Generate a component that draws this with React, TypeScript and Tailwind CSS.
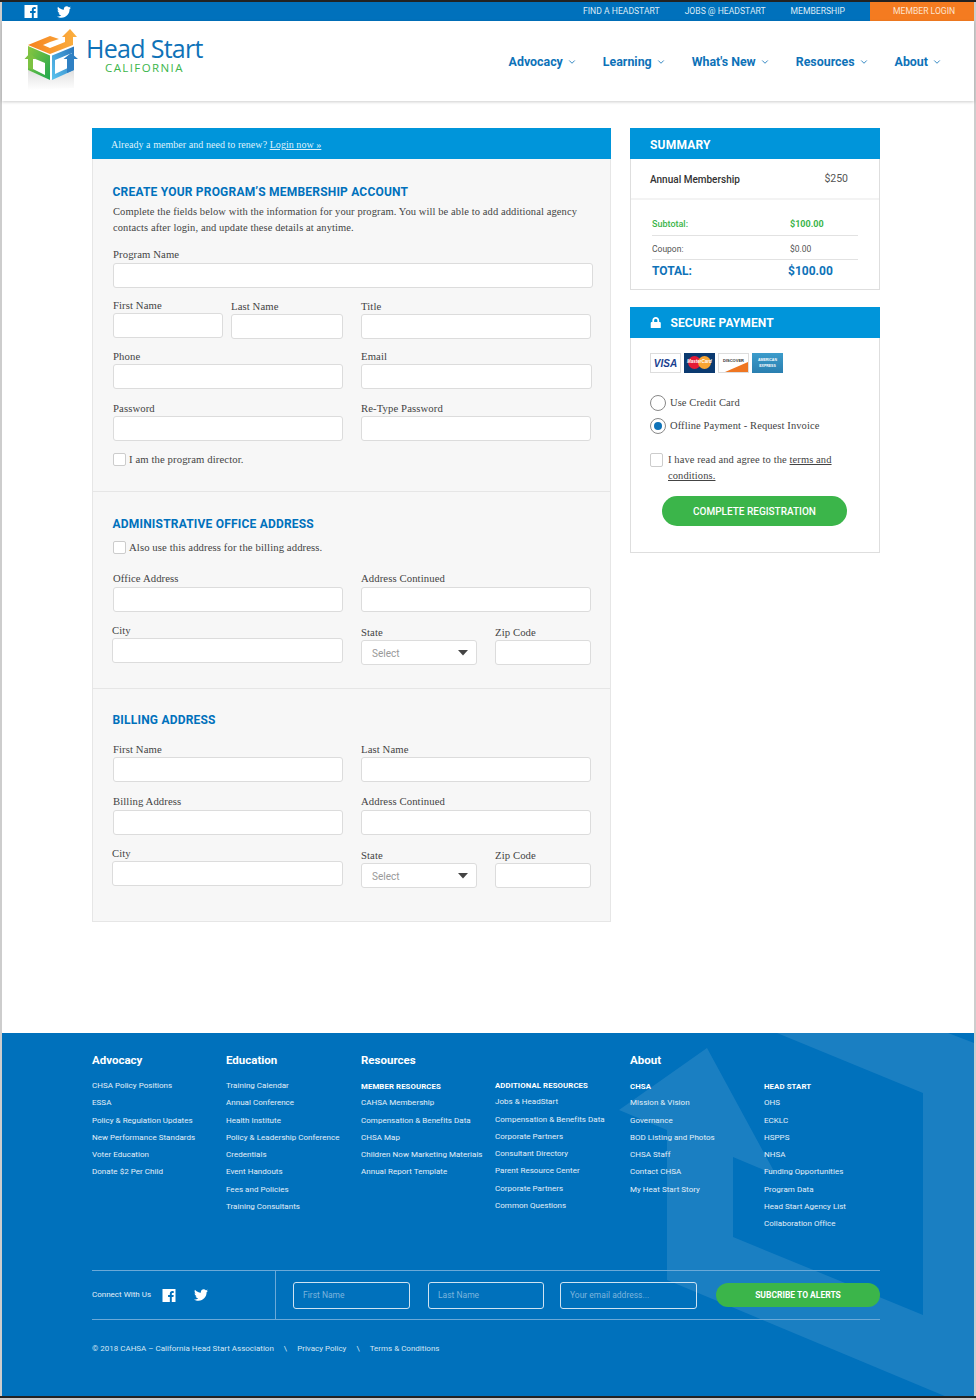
import React from "react";
import { FaTwitter, FaLock } from "react-icons/fa";
import { ChevronDown } from "lucide-react";

const serif = "[font-family:'Liberation_Serif',serif] text-[10.5px] tracking-[0.1px] text-[#444]";
const serifLabel = "[font-family:'Liberation_Serif',serif] text-[10.7px] tracking-[0.1px] text-[#444]";

function Fb({ className }: { className?: string }) {
  return (
    <svg viewBox="0 0 14 14" className={className} fill="white">
      <path d="M0 0H14V14H10V8.6h1.8l.3-2.1H10V5.2c0-.6.2-1 1-1h1.1V2.3C11.9 2.3 11.3 2.2 10.6 2.2 9 2.2 7.9 3.2 7.9 5v1.5H6v2.1h1.9V14H0Z" />
    </svg>
  );
}

function Logo() {
  return (
    <svg viewBox="22 26 58 66" width="58" height="66" className="shrink-0">
      <defs>
        <linearGradient id="or" x1="0" y1="0" x2="1" y2="0">
          <stop offset="0" stopColor="#f58220" />
          <stop offset="1" stopColor="#fbb040" />
        </linearGradient>
        <linearGradient id="gr" x1="0" y1="0" x2="1" y2="1">
          <stop offset="0" stopColor="#8dc63f" />
          <stop offset="1" stopColor="#1fa84f" />
        </linearGradient>
        <linearGradient id="bl" x1="0" y1="1" x2="1" y2="0">
          <stop offset="0" stopColor="#5cc4ef" />
          <stop offset="1" stopColor="#2a75bb" />
        </linearGradient>
        <linearGradient id="sh" x1="0" y1="0" x2="0" y2="1">
          <stop offset="0" stopColor="#e0e0e0" />
          <stop offset="1" stopColor="#ffffff" />
        </linearGradient>
      </defs>
      <polygon points="28,70 50,80 74,70 74,88 28,90" fill="url(#sh)" />
      <path fill="url(#or)" d="M28 45 50 36 59 39 50 42 43 45 50 48 65 42 65 37 62 37 70 29 77 37 73 37 73 45 50 54Z" />
      <polygon points="28,46 50,55.5 50,80 28,70" fill="url(#gr)" />
      <polygon points="33,58 45,63 45,75 33,69" fill="white" />
      <polygon points="30,53 36.5,59 33,59 33,70 28,68 28,59 24.5,59" fill="#7cc242" />
      <polygon points="52,55.5 74,46.5 74,70 52,80" fill="url(#bl)" />
      <polygon points="55,60 72,53 72,66 55,74" fill="white" />
      <polygon points="71,53 78,59 74,59 74,70 67,73 67,59 63.5,59" fill="#2f80c3" />
    </svg>
  );
}

function Field({
  label,
  className,
  labelClass = "",
}: {
  label: string;
  className: string;
  labelClass?: string;
}) {
  return (
    <div className={className}>
      <label className={`block h-4 leading-4 ${serifLabel} ${labelClass}`}>{label}</label>
      <input type="text" className="block h-[25px] w-full rounded-[3px] border border-[#dcdcdc] bg-white" />
    </div>
  );
}

function SelectField() {
  return (
    <div className="mt-[2px] w-[116px]">
      <label className={`block h-4 leading-4 ${serifLabel}`}>State</label>
      <div className="flex h-[25px] items-center justify-between rounded-[3px] border border-[#dcdcdc] bg-white pl-[10px] pr-[8px] pt-px [font-family:Roboto,sans-serif] text-[10px] text-[#999]">
        <span>Select</span>
        <svg width="10" height="6" viewBox="0 0 10 6">
          <polygon points="0,0 10,0 5,5.5" fill="#444" />
        </svg>
      </div>
    </div>
  );
}

function Heading({ children }: { children: React.ReactNode }) {
  return (
    <h2 className="-ml-[0.5px] h-4 [font-family:Roboto,sans-serif] text-[12px] font-bold uppercase leading-[18px] tracking-[0.2px] text-[#0071bc]">
      {children}
    </h2>
  );
}

function Check({ children }: { children: React.ReactNode }) {
  return (
    <div className="flex h-[13px] items-center">
      <span className="h-[13px] w-[13px] rounded-[2px] border border-[#ccc] bg-white" />
      <span className={`ml-[3px] ${serifLabel}`}>{children}</span>
    </div>
  );
}

function Cards() {
  return (
    <div className="flex gap-[3px]">
      <div className="flex h-[20px] w-[31px] items-center justify-center border border-[#ddd] bg-white [font-family:'Liberation_Sans',sans-serif] text-[10px] font-bold italic text-[#1a3f8f]">
        VISA
      </div>
      <div className="relative h-[20px] w-[31px] overflow-hidden bg-[#0b3a70]">
        <span className="absolute left-[4px] top-[3px] h-[13px] w-[13px] rounded-full bg-[#e31b35]" />
        <span className="absolute left-[14px] top-[3px] h-[13px] w-[13px] rounded-full bg-[#f9a533]" />
        <span className="absolute inset-x-0 top-[6px] text-center [font-family:'Liberation_Sans',sans-serif] text-[4.5px] font-bold italic leading-[6px] text-white">
          MasterCard
        </span>
      </div>
      <div className="relative h-[20px] w-[31px] overflow-hidden border border-[#ddd] bg-white">
        <span className="absolute inset-x-0 top-[4px] text-center [font-family:'Liberation_Sans',sans-serif] text-[4px] font-bold leading-[5px] text-[#333]">
          DISCOVER
        </span>
        <svg className="absolute bottom-0 right-0" width="29" height="10" viewBox="0 0 29 10">
          <polygon points="29,0 29,10 6,10" fill="#ef7622" />
        </svg>
      </div>
      <div className="flex h-[20px] w-[31px] flex-col items-center justify-center bg-gradient-to-b from-[#3c9ccb] to-[#2a7fb0] [font-family:'Liberation_Sans',sans-serif] text-[3.5px] font-bold leading-[6px] text-white">
        <span>AMERICAN</span>
        <span>EXPRESS</span>
      </div>
    </div>
  );
}

const link = "block h-[17.25px] leading-[17.25px] [font-family:Roboto,sans-serif] text-[8px] tracking-[0.03px] text-[#e3eff8]";
const sub = "block h-[17.25px] leading-[19px] [font-family:Roboto,sans-serif] text-[7.8px] font-bold uppercase tracking-[0.1px] text-white";
const colHead = "h-4 leading-4 [font-family:Roboto,sans-serif] text-[11.5px] font-bold text-white";

function Col({ head, subhead, items, className = "" }: { head?: string; subhead?: string; items: string[]; className?: string }) {
  return (
    <div className={className}>
      <div className={colHead}>{head ?? "\u00a0"}</div>
      <div className="mt-[9px]">
        {subhead && <span className={sub}>{subhead}</span>}
        {items.map((t, i) => (
          <span key={i} className={link}>
            {t}
          </span>
        ))}
      </div>
    </div>
  );
}

function FooterInput({ placeholder, className }: { placeholder: string; className: string }) {
  return (
    <div className={`flex h-[27px] items-center rounded-[3px] border border-[#cfe3f2] pl-[9px] [font-family:Roboto,sans-serif] text-[8.5px] text-[#7db5dd] ${className}`}>
      {placeholder}
    </div>
  );
}

export default function App() {
  return (
    <div className="flex h-[1400px] flex-col bg-[#cdcdcd] px-[2px]">
      <div className="-mx-[2px] h-[2px] bg-[#222]" />
      <div className="flex h-[19px] items-stretch bg-[#0071bc] [font-family:Roboto,sans-serif] text-[8.6px] text-[#dcebf6]">
        <Fb className="ml-[22px] mt-[3px] h-[13px] w-[14px]" />
        <FaTwitter className="ml-[19px] mt-[3px] text-[14px] text-white" />
        <div className="ml-auto flex items-center gap-[25px] pr-[25px]">
          <span>FIND A HEADSTART</span>
          <span>JOBS @ HEADSTART</span>
          <span>MEMBERSHIP</span>
        </div>
        <div className="flex w-[104px] items-center bg-[#f47b20] pl-[23px] text-[#fde3cf]">MEMBER LOGIN</div>
      </div>

      <header className="relative z-10 flex h-[80px] items-start bg-white shadow-[0_1px_3px_rgba(0,0,0,0.2)]">
        <div className="ml-[20px] mt-[5px]">
          <Logo />
        </div>
        <div className="ml-[6px] mt-[14px] flex flex-col">
          <span className="[font-family:'Open_Sans',sans-serif] text-[25px] font-medium leading-[26px] tracking-[-0.7px] text-[#0e72b8]">
            Head Start
          </span>
          <span className="ml-[19px] [font-family:'Open_Sans',sans-serif] text-[11.5px] font-medium leading-[14px] tracking-[1.4px] text-[#3bb54a]">
            CALIFORNIA
          </span>
        </div>
        <nav className="ml-auto mr-[32px] mt-[33px] flex gap-[26px] [font-family:Roboto,sans-serif] text-[12.4px] font-bold leading-4 text-[#0e72b8]">
          {["Advocacy", "Learning", "What's New", "Resources", "About"].map((n) => (
            <span key={n} className="flex items-center gap-[4px]">
              {n}
              <ChevronDown className="h-[10px] w-[10px]" strokeWidth={2} />
            </span>
          ))}
        </nav>
      </header>

      <main className="flex h-[932px] gap-[19px] bg-white pl-[90px] pt-[27px]">
        <div className="w-[519px]">
          <div className="flex h-[31px] items-center bg-[#0095da] pl-[19px] pt-[2px] [font-family:'Liberation_Serif',serif] text-[10px] tracking-[0.05px] text-[#dff1fb]">
            Already a member and need to renew?&nbsp;<span className="underline">Login now »</span>
          </div>
          <div className="border-x border-b border-[#e6e6e6] bg-[#f7f7f7]">
            <section className="pb-[25px] pl-[20px] pr-[16px] pt-[24px]">
              <Heading>Create your program’s membership account</Heading>
              <p className={`mt-[5px] leading-4 ${serif}`}>
                Complete the fields below with the information for your program. You will be able to add additional agency contacts after login, and update these details at anytime.
              </p>
              <Field label="Program Name" className="mt-[10px] w-[480px]" labelClass="mb-px" />
              <div className="mt-[9px] flex items-start">
                <Field label="First Name" className="w-[110px]" />
                <Field label="Last Name" className="ml-[8px] mt-px w-[112px]" />
                <Field label="Title" className="ml-[18px] mt-px w-[230px]" />
              </div>
              <div className="mt-[9px] flex gap-[18px]">
                <Field label="Phone" className="w-[230px]" />
                <Field label="Email" className="w-[231px]" />
              </div>
              <div className="mt-[11px] flex gap-[18px]">
                <Field label="Password" className="w-[230px]" />
                <Field label="Re-Type Password" className="w-[230px]" />
              </div>
              <div className="mt-[12px]">
                <Check>I am the program director.</Check>
              </div>
            </section>

            <section className="border-t border-[#e6e6e6] pb-[23px] pl-[20px] pr-[16px] pt-[23px]">
              <Heading>Administrative office address</Heading>
              <div className="mt-[10px]">
                <Check>Also use this address for the billing address.</Check>
              </div>
              <div className="mt-[16px] flex gap-[18px]">
                <Field label="Office Address" className="w-[230px]" labelClass="mb-px" />
                <Field label="Address Continued" className="w-[230px]" labelClass="mb-px" />
              </div>
              <div className="mt-[10px] flex items-start">
                <Field label="City" className="-ml-px w-[231px]" />
                <div className="ml-[18px]">
                  <SelectField />
                </div>
                <Field label="Zip Code" className="ml-[18px] mt-[2px] w-[96px]" />
              </div>
            </section>

            <section className="border-t border-[#e6e6e6] pb-[33px] pl-[20px] pr-[16px] pt-[22px]">
              <Heading>Billing address</Heading>
              <div className="mt-[14px] flex gap-[18px]">
                <Field label="First Name" className="w-[230px]" />
                <Field label="Last Name" className="w-[230px]" />
              </div>
              <div className="mt-[11px] flex gap-[18px]">
                <Field label="Billing Address" className="w-[230px]" labelClass="mb-px" />
                <Field label="Address Continued" className="w-[230px]" labelClass="mb-px" />
              </div>
              <div className="mt-[10px] flex items-start">
                <Field label="City" className="-ml-px w-[231px]" />
                <div className="ml-[18px]">
                  <SelectField />
                </div>
                <Field label="Zip Code" className="ml-[18px] mt-[2px] w-[96px]" />
              </div>
            </section>
          </div>
        </div>

        <div className="w-[250px]">
          <div className="flex h-[31px] items-center bg-[#0095da] pl-[20px] pt-[2px] [font-family:Roboto,sans-serif] text-[12px] font-bold tracking-[0.2px] text-white">
            SUMMARY
          </div>
          <div className="border-x border-b border-[#dedede] [font-family:Roboto,sans-serif]">
            <div className="flex h-[41px] items-center justify-between border-b-2 border-[#f3f3f3] pl-[19px] pr-[31px] pt-px text-[10px]">
              <span className="font-medium text-[#333]">Annual Membership</span>
              <span className="text-[10.5px] text-[#555]">$250</span>
            </div>
            <div className="ml-[21px] mr-[21px] pb-[7px]">
              <div className="flex h-[36px] border-b border-[#e2e2e2] pt-[16px] text-[9px] font-medium leading-4 text-[#3bb54a]">
                <span className="w-[138px]">Subtotal:</span>
                <span className="font-bold">$100.00</span>
              </div>
              <div className="flex h-[24px] border-b border-[#e2e2e2] pt-[5px] text-[8.5px] leading-4 text-[#555]">
                <span className="w-[138px]">Coupon:</span>
                <span>$0.00</span>
              </div>
              <div className="flex h-[22px] text-[12px] font-bold leading-[22px] text-[#0e72b8]">
                <span className="w-[136px]">TOTAL:</span>
                <span>$100.00</span>
              </div>
            </div>
          </div>

          <div className="mt-[17px] flex h-[31px] items-center bg-[#0095da] pl-[20px] [font-family:Roboto,sans-serif] text-[12px] font-bold tracking-[0.1px] text-white">
            <FaLock className="mr-[9px] text-[11.5px]" />
            SECURE PAYMENT
          </div>
          <div className="border-x border-b border-[#dedede] pb-[26px] pl-[19px] pt-[15px]">
            <Cards />
            <div className="mt-[22px] flex items-center">
              <span className="h-[16px] w-[16px] rounded-full border border-[#888] bg-white" />
              <span className={`ml-[4px] ${serif}`}>Use Credit Card</span>
            </div>
            <div className="mt-[7px] flex items-center">
              <span className="flex h-[16px] w-[16px] items-center justify-center rounded-full border border-[#888] bg-white">
                <span className="h-[8px] w-[8px] rounded-full bg-[#0e72b8]" />
              </span>
              <span className={`ml-[4px] ${serif}`}>Offline Payment - Request Invoice</span>
            </div>
            <div className="mt-[18px] flex items-start">
              <span className="mt-px h-[14px] w-[13px] shrink-0 rounded-[2px] border border-[#ccc] bg-white" />
              <span className={`ml-[5px] w-[180px] leading-4 ${serif}`}>
                I have read and agree to the <span className="underline">terms and conditions.</span>
              </span>
            </div>
            <div className="ml-[12px] mt-[12px] flex h-[30px] w-[185px] items-center justify-center rounded-full bg-[#3bb54a] [font-family:Roboto,sans-serif] text-[10px] font-medium text-white">
              COMPLETE REGISTRATION
            </div>
          </div>
        </div>
      </main>

      <footer className="relative h-[363px] overflow-hidden bg-[#0071bc] pl-[90px] pt-[19px]">
        <svg className="absolute left-0 top-0" width="972" height="363" viewBox="2 1033 972 363">
          <polygon
            fill="#ffffff"
            fillOpacity="0.1"
            points="777,1033 923,1093 923,1315 733,1237 733,1157 776,1175 707,1048 619,1110 667,1130 667,1280 947,1397 974,1397 974,1043 948,1033"
          />
        </svg>
        <div className="relative w-[788px]">
          <div className="grid h-[218px] grid-cols-[134px_135px_134px_135px_134px_116px]">
            <Col head="Advocacy" items={["CHSA Policy Positions", "ESSA", "Policy & Regulation Updates", "New Performance Standards", "Voter Education", "Donate $2 Per Child"]} />
            <Col head="Education" items={["Training Calendar", "Annual Conference", "Health Institute", "Policy & Leadership Conference", "Credentials", "Event Handouts", "Fees and Policies", "Training Consultants"]} />
            <Col head="Resources" subhead="Member Resources" items={["CAHSA Membership", "Compensation & Benefits Data", "CHSA Map", "Children Now Marketing Materials", "Annual Report Template"]} />
            <Col className="-mt-px" subhead="Additional Resources" items={["Jobs & HeadStart", "Compensation & Benefits Data", "Corporate Partners", "Consultant Directory", "Parent Resource Center", "Corporate Partners", "Common Questions"]} />
            <Col head="About" subhead="CHSA" items={["Mission & Vision", "Governance", "BOD Listing and Photos", "CHSA Staff", "Contact CHSA", "My Heat Start Story"]} />
            <Col subhead="Head Start" items={["OHS", "ECKLC", "HSPPS", "NHSA", "Funding Opportunities", "Program Data", "Head Start Agency List", "Collaboration Office"]} />
          </div>
          <div className="flex h-[50px] items-stretch border-y border-[#6aa9d8]">
            <div className="flex w-[184px] items-center border-r border-[#6aa9d8] [font-family:Roboto,sans-serif] text-[8px] text-[#e3eff8]">
              <span>Connect With Us</span>
              <Fb className="ml-[11px] h-[13px] w-[14px]" />
              <FaTwitter className="ml-[18px] text-[14px] text-white" />
            </div>
            <div className="flex items-center pl-[17px]">
              <FooterInput placeholder="First Name" className="w-[117px]" />
              <FooterInput placeholder="Last Name" className="ml-[18px] w-[116px]" />
              <FooterInput placeholder="Your email address..." className="ml-[16px] w-[137px]" />
              <div className="ml-[19px] flex h-[24px] w-[164px] items-center justify-center rounded-full bg-[#3bb54a] [font-family:Roboto,sans-serif] text-[8.5px] font-bold text-white">
                SUBCRIBE TO ALERTS
              </div>
            </div>
          </div>
          <div className="mt-[21px] flex h-4 items-center [font-family:Roboto,sans-serif] text-[8px] leading-4 text-[#d5e6f3]">
            <span>© 2018 CAHSA – California Head Start Association</span>
            <span className="mx-[10px]">\</span>
            <span>Privacy Policy</span>
            <span className="mx-[10px]">\</span>
            <span>Terms &amp; Conditions</span>
          </div>
        </div>
      </footer>
      <div className="-mx-[2px] h-[2px] bg-[#222]" />
    </div>
  );
}
